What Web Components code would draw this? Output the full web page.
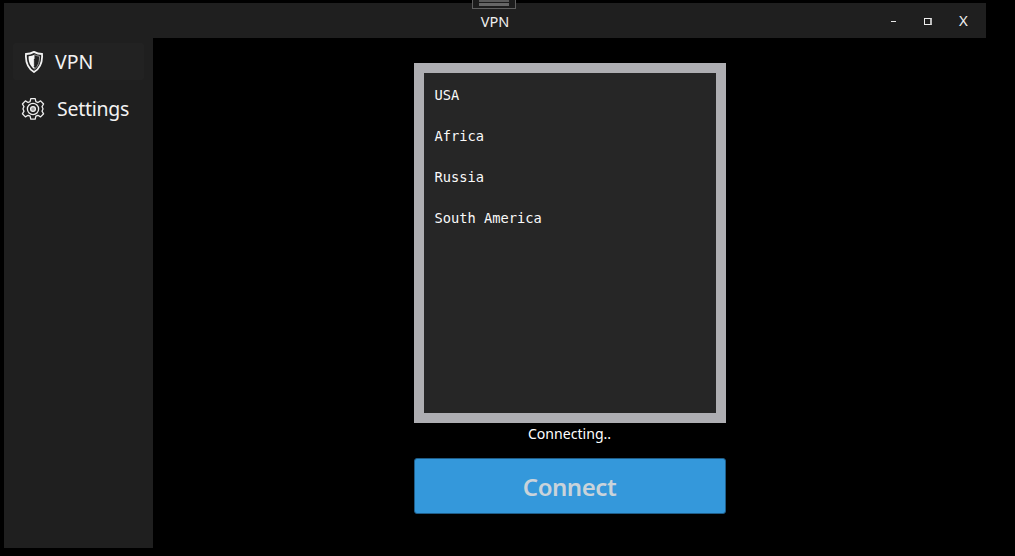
<!DOCTYPE html>
<html><head><meta charset="utf-8">
<style>
html,body{margin:0;padding:0;background:#000;height:100%;overflow:hidden}
body{font-family:"Noto Sans","Open Sans",sans-serif;color:#fff}
</style></head><body>
<vpn-window></vpn-window>
<template id="tw">
<style>
:host{display:block;position:relative;width:1015px;height:556px;box-sizing:border-box;padding:3px 29px 8px 4px;background:#000;overflow:hidden}
.frame{display:flex;flex-direction:column;height:100%}
.body{flex:1;display:flex;min-height:0}
.main{flex:1;display:flex;justify-content:center}
.grip{position:absolute;z-index:2;left:472px;top:-1px;width:42px;height:8px;border:1px solid #5e5e5e;background:#1c1c1c;display:flex;flex-direction:column;align-items:center;gap:1px;padding:0}
.grip i{display:block;width:30px;height:2px;background:#5a5a5a}
.grip i+i{height:3px;background:#666}
</style>
<div class="grip"><i></i><i></i></div>
<div class="frame">
<title-bar>VPN</title-bar>
<div class="body">
<side-bar></side-bar>
<div class="main"><connect-panel></connect-panel></div>
</div>
</div>
</template>
<template id="tt">
<style>
:host{display:flex;align-items:center;justify-content:center;position:relative;height:35px;background:#1f1f1f;font-size:14.5px;color:#f0f0f0}
.title{padding-top:1px}
.ctl{position:absolute;right:5px;top:0;bottom:0;display:flex;align-items:center}
.b{width:35px;display:flex;align-items:center;justify-content:center;height:100%;color:#eee}
.min{width:5px;height:1px;background:#e8e8e8;margin-top:1px;margin-left:2px}
.max{width:5px;height:5px;border:1px solid #eee;border-right:2px solid #bbb;margin-top:2px;margin-left:1px}
.x{font-size:15px;margin-top:-1px;margin-left:1px}
</style>
<span class="title"><slot></slot></span>
<div class="ctl">
<div class="b"><span class="min"></span></div>
<div class="b"><span class="max"></span></div>
<div class="b x">X</div>
</div>
</template>
<template id="ts">
<style>
:host{display:flex;flex-direction:column;width:149px;background:#1f1f1f;box-sizing:border-box;padding:5px 9px 0 9px}
</style>
<nav-item active label="VPN"><svg viewBox="0 0 18 22" width="18" height="22" fill="none" xmlns="http://www.w3.org/2000/svg"><path d="M9 .9C6.700 2.200 3.800 3 1 3c-.6 7.500 1.300 14 8 18.100C15.700 17 17.600 10.500 17 3 14.200 3 11.300 2.200 9 .9z" stroke="#f2f2f2" stroke-width="1.800"/><path d="M9.500 3.700C7.800 4.500 5.700 5.100 3.600 5.200c-.2 5.200 1.200 9.800 5.900 13V16.200L8.500 15.200l1-1.100-1-1 1-1.100-1-1 1-1.100-1-1 1-1.100z" fill="#f6f6f6"/><path d="M9.500 3.700c1.500.8 3 1.400 5 1.500.2 5.200-1 9.800-5 12.900" stroke="#9a9a9a" stroke-width="1"/></svg></nav-item>
<nav-item label="Settings" gear><svg viewBox="0 0 24 24" width="24" height="24" fill="none" stroke="#eee" stroke-width="1.300" stroke-linejoin="round" xmlns="http://www.w3.org/2000/svg"><path d="M9.800 1.600h4.400l.7 3 2 .9 2.700-1.600 3 3.100-1.600 2.600.9 2 0 .6-.9 2 1.600 2.600-3 3.100-2.700-1.600-2 .9-.7 3H9.800l-.7-3-2-.9-2.700 1.600-3-3.100 1.600-2.600-.9-2 0-.6.900-2-1.600-2.600 3-3.100 2.700 1.600 2-.9z"/><circle cx="12" cy="12" r="5.600"/><circle cx="12" cy="12" r="2.400" fill="#999"/></svg></nav-item>
</template>
<template id="tn">
<style>
:host{display:block;height:37px;margin-bottom:10px;border-radius:2px;color:#f2f2f2;font-size:19.500px;letter-spacing:-.25px}
:host([active]){background:#222}
.row{display:flex;align-items:center;height:100%;padding-left:12px;gap:12px}
:host([active]) .l{letter-spacing:0}
:host([gear]) .row{padding-left:8px;gap:12px}
::slotted(svg){display:block}
</style>
<div class="row"><slot></slot><span class="l"></span></div>
</template>
<template id="tp">
<style>
:host{display:flex;flex-direction:column;align-items:center;width:312px;padding-top:25px}
.st{font-size:14.100px;line-height:20px;height:20px;margin-top:1px;color:#fff}
button{all:unset;box-sizing:border-box;width:312px;height:56px;margin-top:14px;background:#3498db;border:1px solid #1f5d88;border-radius:3px;color:#c9d3da;font-family:inherit;font-size:24px;font-weight:600;letter-spacing:-.45px;text-align:center;line-height:56px}
</style>
<location-list></location-list>
<div class="st">Connecting..</div>
<button>Connect</button>
</template>
<template id="tl">
<style>
:host{display:block;box-sizing:border-box;width:312px;height:360px;border:10px solid #aeaeb2;background:#262626;padding:0 11px;font-family:"DejaVu Sans Mono","Liberation Mono",monospace;font-size:13.700px;color:#fafafa}
div{height:41px;line-height:20px;display:block}
.first{margin-top:12px}
</style>
<div class="first">USA</div><div>Africa</div><div>Russia</div><div>South America</div>
</template>
<script>
function def(name,tid,init){customElements.define(name,class extends HTMLElement{constructor(){super();this.attachShadow({mode:'open'}).appendChild(document.getElementById(tid).content.cloneNode(true));}connectedCallback(){if(init)init(this);}});}
def('title-bar','tt');
def('nav-item','tn',function(e){e.shadowRoot.querySelector('.l').textContent=e.getAttribute('label');});
def('side-bar','ts');
def('location-list','tl');
def('connect-panel','tp');
def('vpn-window','tw');
</script>
</body></html>
